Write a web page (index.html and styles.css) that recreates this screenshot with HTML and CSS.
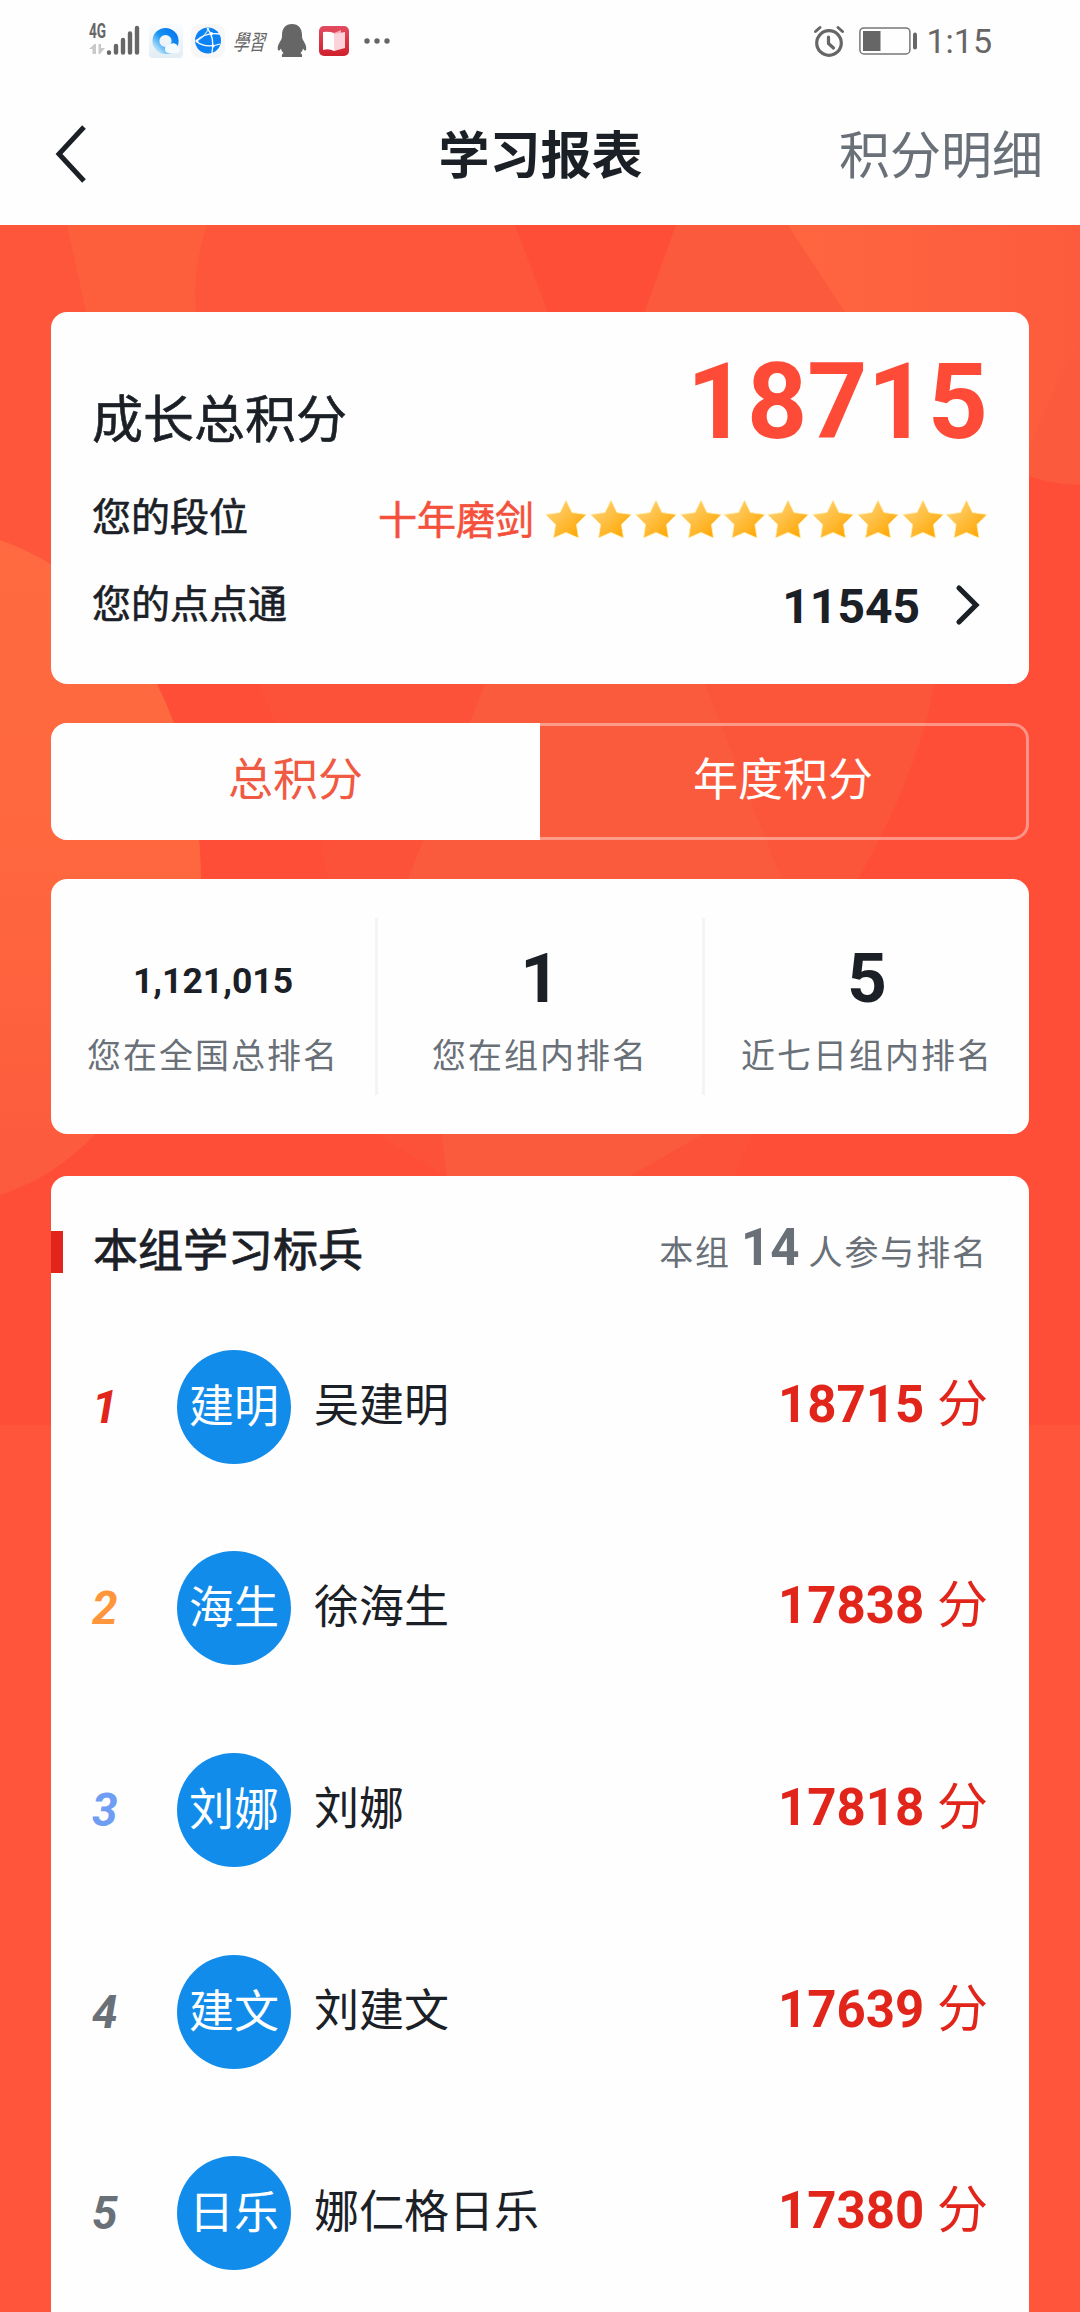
FILE: index.html
```html
<!DOCTYPE html>
<html lang="zh-CN">
<head>
<meta charset="utf-8">
<title>学习报表</title>
<link rel="stylesheet" href="styles.css">
</head>
<body>
<div class="statusbar">
  <div class="status-left">
    <div class="signal">
      <div class="network"><span class="network-type">4G</span>
        <svg width="17" height="11" viewBox="0 0 17 11" fill="#c9c9c9"><path d="M0 5 5.500 0H7V10H3.500V5ZM9.500 0H12V4H16L11 10H9.500Z"/></svg>
      </div>
      <svg width="34" height="33" viewBox="0 0 34 33" stroke="#666" stroke-width="4.400" stroke-linecap="round"><path d="M3 28.500v.2M10 22v6.500M17 16v12.500M24 9.500v19M31 4v24.500" /></svg>
    </div>
    <svg class="app-browser" width="34" height="34" viewBox="0 0 34 34">
      <defs><linearGradient id="ring" x1="1" y1="0" x2="0" y2="1"><stop offset="0" stop-color="#0678f0"/><stop offset=".5" stop-color="#1793f2"/><stop offset="1" stop-color="#c5e9fb"/></linearGradient>
      <linearGradient id="tile" x1="0" y1="0" x2="0" y2="1"><stop offset="0" stop-color="#fbfcfd"/><stop offset="1" stop-color="#e3edf4"/></linearGradient></defs>
      <rect width="34" height="34" rx="4" fill="url(#tile)"/>
      <circle cx="16.500" cy="17" r="9.600" fill="none" stroke="url(#ring)" stroke-width="7"/>
      <path d="M20 29a4 4 0 0 1 0-8 5.500 5.500 0 0 1 9 1.500A3.500 3.500 0 0 1 29 29Z" fill="#f4fbff"/>
    </svg>
    <svg class="app-globe" width="34" height="34" viewBox="0 0 34 34">
      <rect width="34" height="34" rx="9" fill="#f7f7f7"/>
      <circle cx="17" cy="16.500" r="13" fill="#0b83f5"/>
      <g fill="none" stroke="#fff" stroke-width="1.300"><path d="M16 4Q24 13 21 29M5 17Q14 8 29 10M5 17Q14 25 29 20"/><path d="M5 17Q13 14 18 4" opacity=".7"/></g>
      <g fill="#fff"><circle cx="20.500" cy="9.500" r="1.500"/><circle cx="6" cy="17" r="1.500"/><circle cx="22" cy="22" r="1.500"/></g>
    </svg>
    <span class="app-script">學習</span>
    <svg class="app-penguin" width="30" height="34" viewBox="0 0 30 34" fill="#666"><path d="M15 0C8.500 0 5 4.500 5 11c0 2 0 3-1 5C2 19 0 23 1 26c.6 1.500 2.200-.4 3-1.600.5 2 1.300 3.600 2.600 4.900C5 30 4.500 31 5 33h20c.5-2 0-3-1.600-3.700 1.300-1.300 2.100-2.900 2.600-4.900.8 1.200 2.400 3.100 3 1.600 1-3-1-7-3-10-1-2-1-3-1-5C25 4.500 21.500 0 15 0Z"/></svg>
    <svg class="app-book" width="30" height="30" viewBox="0 0 30 30">
      <defs><linearGradient id="cover" x1="0" y1="0" x2="0" y2="1"><stop offset="0" stop-color="#e34b60"/><stop offset="1" stop-color="#cf202d"/></linearGradient></defs>
      <rect width="30" height="30" rx="5" fill="url(#cover)"/>
      <path d="M15 7 22 4V22L15 25Z" fill="#f9a9b6"/><path d="M15 8 26 6V22L15 25Z" fill="#fcd3da"/><path d="M4 6Q10 5 15 7V25Q10 22 4 24Z" fill="#fff"/>
    </svg>
    <svg class="more" width="26" height="6" viewBox="0 0 26 6" fill="#666"><circle cx="3" cy="3" r="2.700"/><circle cx="13" cy="3" r="2.700"/><circle cx="23" cy="3" r="2.700"/></svg>
  </div>
  <div class="status-right">
    <svg width="32" height="32" viewBox="0 0 32 32" fill="none" stroke="#666" stroke-linecap="round" stroke-linejoin="round"><circle cx="16" cy="18" r="12.300" stroke-width="3.200"/><path d="M15.500 12v6.500l5 4.500" stroke-width="3.200"/><path d="M2.500 6.500 7 2.500M25 2.500l4.500 4" stroke-width="3"/></svg>
    <svg width="58" height="28" viewBox="0 0 58 28"><rect x=".9" y=".9" width="50" height="26" rx="4" fill="none" stroke="#777" stroke-width="1.500"/><rect x="4" y="4" width="17.500" height="20" fill="#666"/><rect x="54" y="5.500" width="4" height="17" rx="2" fill="#666"/></svg>
    <span class="clock">1:15</span>
  </div>
</div>

<header class="navbar">
  <svg class="back" width="36" height="60" viewBox="0 0 36 60" fill="none" stroke="#1b2026" stroke-width="5"><path d="M31 3 6 30 31 57"/></svg>
  <h1 class="title">学习报表</h1>
  <a class="detail">积分明细</a>
</header>

<main class="page">
  <svg class="backdrop" width="1080" height="1200" viewBox="0 225 1080 1200">
    <defs>
      <linearGradient id="glow" x1="0" y1="540" x2="0" y2="1195" gradientUnits="userSpaceOnUse"><stop offset="0" stop-color="#ff6a40"/><stop offset=".45" stop-color="#ff683f"/><stop offset="1" stop-color="#fc5a3d"/></linearGradient>
      <linearGradient id="beam" x1="788" y1="0" x2="1080" y2="0" gradientUnits="userSpaceOnUse"><stop offset="0" stop-color="#fe6640"/><stop offset="1" stop-color="#fd5b3d"/></linearGradient>
    </defs>
    <rect y="225" width="1080" height="1200" fill="#fe4e38"/>
    <path d="M0 225H515L548 312V650H0Z" fill="#fd563a"/>
    <path d="M67 225H207Q192 270 196 312V400H105Z" fill="#fd5f3d"/>
    <path d="M676 225H1080V485Q1050 484 1029 476L620 380Z" fill="#fc5a3c"/>
    <path d="M788 225H1080V345Q1050 390 1029 450L845 312Z" fill="url(#beam)"/>
    <path d="M260 684H935Q915 780 858 879L735 1176H447Q400 1150 378 1134L320 840Z" fill="#fd523a"/>
    <path d="M485 684H705L782 879 703 1134 630 1176H447L408 879Z" fill="#fb5b3d"/>
    <path d="M705 684H935Q915 780 858 879H782Z" fill="#fc563a"/>
    <path d="M0 540Q100 575 157 684 200 770 201 879 190 1040 95 1134 55 1177 0 1195Z" fill="url(#glow)"/>
  </svg>

  <section class="card summary">
    <div class="row total"><span class="total-label">成长总积分</span><span class="total-value">18715</span></div>
    <div class="row">
      <span>您的段位</span>
      <div class="level">
        <span class="level-name">十年磨剑</span>
        <svg class="stars" width="448" height="40" viewBox="0 0 448 40">
          <defs>
            <linearGradient id="gold" x1="0" y1="0" x2="1" y2="1"><stop offset=".15" stop-color="#ffd070"/><stop offset=".85" stop-color="#ffa909"/></linearGradient>
            <path id="star" d="M21 1 27 13.500 41.500 15.500 31.500 25.500 33.500 39 21 33.500 8.500 39 10.500 25.500 .5 15.500 15 13.500Z" fill="url(#gold)" stroke="#fff1b8" stroke-width=".8"/>
          </defs>
          <use href="#star"/><use href="#star" x="45"/><use href="#star" x="90"/><use href="#star" x="135"/><use href="#star" x="178.500"/><use href="#star" x="222"/><use href="#star" x="267"/><use href="#star" x="312"/><use href="#star" x="357"/><use href="#star" x="400.500"/>
        </svg>
      </div>
    </div>
    <div class="row">
      <span>您的点点通</span>
      <div class="points"><b class="points-value">11545</b>
        <svg width="26" height="42" viewBox="0 0 26 42" fill="none" stroke="#1b2026" stroke-width="5.200" stroke-linecap="round"><path d="M4 4 21 21 4 38"/></svg>
      </div>
    </div>
  </section>

  <nav class="tabs"><a class="tab active">总积分</a><a class="tab">年度积分</a></nav>

  <section class="card stats">
    <div class="stat"><b class="stat-value small">1,121,015</b><span class="stat-label">您在全国总排名</span></div>
    <div class="stat"><b class="stat-value">1</b><span class="stat-label">您在组内排名</span></div>
    <div class="stat"><b class="stat-value">5</b><span class="stat-label">近七日组内排名</span></div>
  </section>

  <section class="card group">
    <div class="group-head">
      <h2 class="group-title">本组学习标兵</h2>
      <div class="group-count">本组<b class="count">14</b>人参与排名</div>
    </div>
    <ol class="ranking">
      <li class="entry"><i class="rank first">1</i><span class="avatar">建明</span><span class="name">吴建明</span><span class="score"><b>18715</b> 分</span></li>
      <li class="entry"><i class="rank second">2</i><span class="avatar">海生</span><span class="name">徐海生</span><span class="score"><b>17838</b> 分</span></li>
      <li class="entry"><i class="rank third">3</i><span class="avatar">刘娜</span><span class="name">刘娜</span><span class="score"><b>17818</b> 分</span></li>
      <li class="entry"><i class="rank">4</i><span class="avatar">建文</span><span class="name">刘建文</span><span class="score"><b>17639</b> 分</span></li>
      <li class="entry"><i class="rank">5</i><span class="avatar">日乐</span><span class="name">娜仁格日乐</span><span class="score"><b>17380</b> 分</span></li>
    </ol>
  </section>
</main>
</body>
</html>
```
FILE: styles.css
```css
* { box-sizing: border-box; }

body {
  margin: 0;
  width: 1080px;
  height: 2312px;
  overflow: hidden;
  background: #fefefe;
  color: #1b2026;
  font-family: Roboto, "Noto Sans CJK SC", sans-serif;
  display: flex;
  flex-direction: column;
}

svg { display: block; flex: none; }

/* status bar */
.statusbar {
  flex: none;
  height: 81px;
  padding: 0 88px 0 89px;
  display: flex;
  justify-content: space-between;
  align-items: center;
  color: #666;
}
.status-left, .status-right { display: flex; align-items: center; }
.signal { display: flex; height: 33px; }
.network { width: 17px; display: flex; flex-direction: column; gap: 5px; }
.network-type {
  font: bold 20px/14px Roboto, sans-serif;
  height: 15px;
  width: 24px;
  transform: scaleX(.68);
  transform-origin: left;
}
.app-browser { margin-left: 9px; }
.app-globe { margin-left: 8px; }
.app-script {
  margin-left: 10px;
  width: 34px;
  font-family: "Noto Sans CJK TC", sans-serif;
  font-size: 16px;
  line-height: 28px;
  transform: skewX(-14deg) scaleY(1.35);
}
.app-penguin { margin-left: 8px; }
.app-book { margin-left: 12px; }
.more { margin-left: 15px; }
.status-right > svg + svg { margin-left: 14px; }
.clock { margin-left: 9px; font-size: 34px; line-height: 40px; }

/* navigation bar */
.navbar {
  flex: none;
  height: 144px;
  padding: 0 37px 0 53px;
  display: grid;
  grid-template-columns: 1fr auto 1fr;
  align-items: center;
}
.back { margin-top: 2px; }
.title { margin: 0; font-size: 51px; line-height: 60px; font-weight: bold; padding: 7px 15px 0 0; }
.detail { justify-self: end; font-size: 51px; line-height: 60px; color: #697077; padding-top: 7px; }

/* page body */
.page {
  position: relative;
  flex: 1 0 auto;
  padding: 87px 51px 0;
  background: #ff553a;
  display: flex;
  flex-direction: column;
}
.backdrop { position: absolute; left: 0; top: 0; }
.card { position: relative; background: #fefefe; border-radius: 16px; }

.summary {
  height: 372px;
  padding: 38px 41px 0;
  font-size: 39px;
  line-height: 87px;
  -webkit-text-stroke: .6px;
}
.row { height: 87px; display: flex; justify-content: space-between; }
.total { height: 125px; align-items: baseline; }
.total-label { font-size: 51px; line-height: 60px; }
.total-value { font-size: 105px; line-height: 105px; font-weight: bold; color: #fe4b37; -webkit-text-stroke: 0; }
.level { display: flex; align-items: center; height: 92px; margin-right: -5px; }
.level-name { color: #f4503c; }
.stars { margin: -4px 0 0 11px; }
.points { display: flex; align-items: center; -webkit-text-stroke: 0; margin-right: 7px; }
.points-value { font-size: 48px; line-height: 92px; padding-top: 3px; }
.points svg { margin-left: 35px; margin-top: -2px; }

.tabs {
  position: relative;
  margin-top: 39px;
  height: 117px;
  display: flex;
  border: 3px solid rgba(255, 255, 255, .4);
  border-left: 0;
  border-radius: 16px;
}
.tab { flex: 1; color: #fefefe; font-size: 45px; line-height: 109px; text-align: center; }
.tab.active {
  flex: none;
  width: 489px;
  margin: -3px 0;
  line-height: 115px;
  background: #fefefe;
  border-radius: 16px 0 0 16px;
  color: #f05a42;
}

.stats { margin-top: 39px; height: 255px; padding: 39px 0; display: grid; grid-template-columns: 324px 327px 327px; }
.stat { display: flex; flex-direction: column; align-items: center; text-align: center; }
.stat + .stat { border-left: 3px solid #f3f4f5; }
.stat-value { height: 108px; font-size: 69px; line-height: 121px; }
.stat-value.small { font-size: 35.500px; line-height: 126px; }
.stat-label { font-size: 34px; line-height: 60px; letter-spacing: 2px; color: #697077; }

/* group ranking */
.group { margin-top: 42px; flex: none; height: 1136px; border-radius: 16px 16px 0 0; }
.group-head {
  position: relative;
  top: 55px;
  height: 42px;
  padding: 0 41px 0 30px;
  border-left: 12px solid #e1251b;
  display: flex;
  justify-content: space-between;
}
.group-title { margin: 0; font-size: 45px; line-height: 42px; font-weight: normal; -webkit-text-stroke: .8px; }
.group-count { font-size: 34px; line-height: 42px; letter-spacing: 1.900px; color: #697077; display: flex; align-items: baseline; margin-top: -4px; }
.count { font-size: 51px; letter-spacing: 0; margin: 0 9px 0 10px; }
.ranking { list-style: none; margin: 88px 0 0; padding: 0 41px; }
.entry { height: 201.600px; display: flex; align-items: center; font-size: 45px; line-height: 60px; }
.rank { width: 85px; font-weight: bold; font-size: 46px; color: #697077; }
.first { color: #e1251b; }
.second { color: #ff963c; }
.third { color: #709df4; }
.avatar { width: 114px; height: 114px; border-radius: 50%; background: #128cea; color: #fefefe; line-height: 116px; text-align: center; }
.name { margin-left: 23px; }
.score { margin: -4px 0 0 auto; font-size: 51px; color: #e1251b; }
```
